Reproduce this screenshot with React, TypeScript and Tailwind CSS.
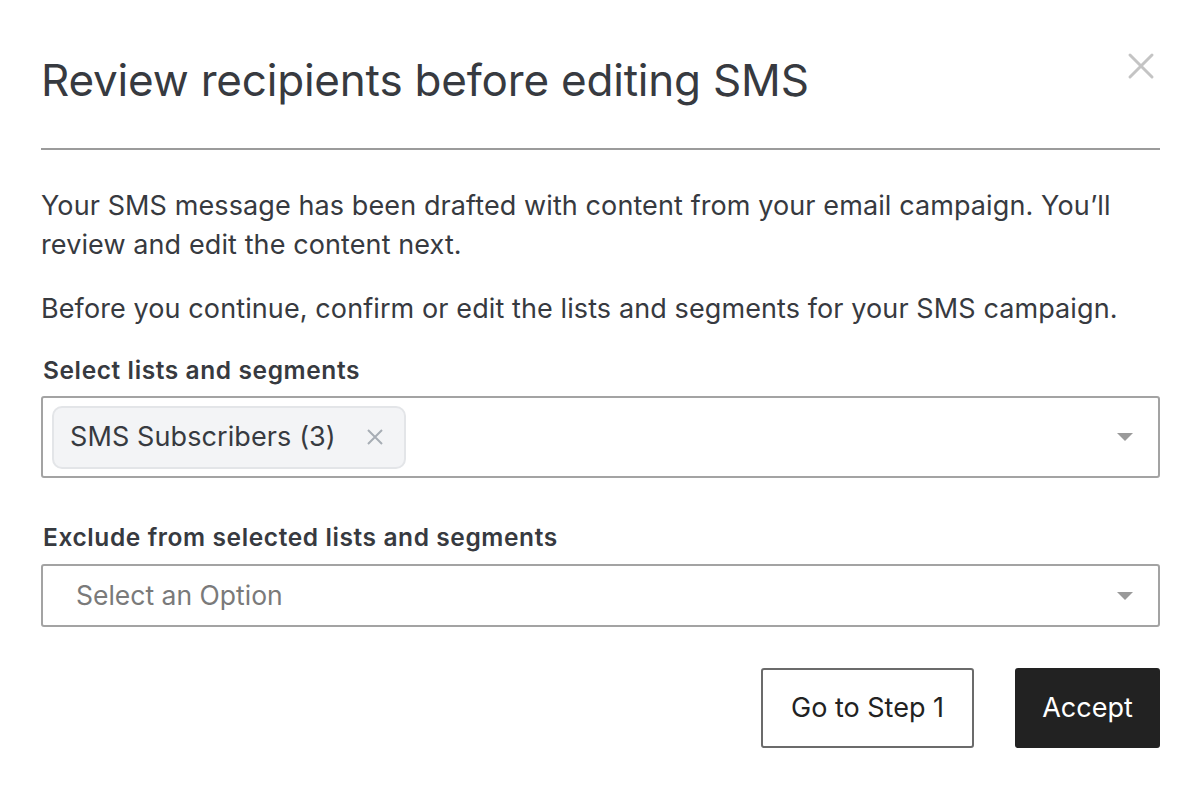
import React from 'react';

const Caret: React.FC = () => (
  <svg width="18" height="10" viewBox="0 0 18 10" className="shrink-0">
    <path d="M1 1 L17 1 L9 9 Z" fill="#9a9a9a" />
  </svg>
);

export default function App() {
  return (
    <div
      className="w-[1200px] h-[788px] bg-white text-[#373a40]"
      style={{ fontFamily: 'Inter, "Noto Sans", sans-serif' }}
    >
      <div className="pl-[41px] pr-[40px] pt-[50px]">
        <div className="flex items-start justify-between">
          <h1 className="text-[44px] leading-[60px] font-normal text-[#373a40] tracking-[-0.2px]">
            Review recipients before editing SMS
          </h1>
          <button className="mt-[1px] mr-[4px]" aria-label="Close">
            <svg width="30" height="30" viewBox="0 0 30 30">
              <path d="M4 4 L26 26 M26 4 L4 26" stroke="#c4c4c4" strokeWidth="3" strokeLinecap="round" />
            </svg>
          </button>
        </div>

        <div className="mt-[38px] h-[2px] bg-[#9b9b9b]" />

        <p className="mt-[36px] text-[27px] leading-[39px] tracking-[0.1px] text-[#373a40]">
          Your SMS message has been drafted with content from your email campaign. You’ll review and edit the content next.
        </p>
        <p className="mt-[25px] text-[27px] leading-[39px] tracking-[0.1px] text-[#373a40]">
          Before you continue, confirm or edit the lists and segments for your SMS campaign.
        </p>

        <label className="block mt-[27px] ml-[2px] text-[24.5px] leading-[30px] tracking-[0.6px] font-semibold text-[#373a40]">
          Select lists and segments
        </label>
        <div className="mt-[11px] h-[82px] rounded-[3px] border-2 border-[#a3a3a3] flex items-center pl-[9px] pr-[24px]">
          <div className="h-[63px] flex items-center rounded-[10px] border-2 border-[#e3e5e8] bg-[#f3f4f6] pl-[16px] pr-[20px]">
            <span className="text-[27px] tracking-[0.1px] text-[#373a40]">SMS Subscribers (3)</span>
            <svg width="18" height="18" viewBox="0 0 18 18" className="ml-[30px]">
              <path d="M2 2 L16 16 M16 2 L2 16" stroke="#a7adb5" strokeWidth="2" />
            </svg>
          </div>
          <div className="flex-1" />
          <Caret />
        </div>

        <label className="block mt-[44px] ml-[2px] text-[24.5px] leading-[30px] tracking-[0.6px] font-semibold text-[#373a40]">
          Exclude from selected lists and segments
        </label>
        <div className="mt-[12px] h-[63px] rounded-[3px] border-2 border-[#a3a3a3] flex items-center pl-[33px] pr-[24px]">
          <span className="flex-1 text-[26.5px] text-[#7a7a7a]">Select an Option</span>
          <Caret />
        </div>

        <div className="mt-[41px] flex justify-end gap-[41px]">
          <button className="h-[80px] w-[213px] rounded-[3px] border-2 border-[#6b6b6b] bg-white text-[27px] text-[#222]">
            Go to Step 1
          </button>
          <button className="h-[80px] w-[145px] rounded-[3px] bg-[#222222] text-[27px] text-white">
            Accept
          </button>
        </div>
      </div>
    </div>
  );
}
